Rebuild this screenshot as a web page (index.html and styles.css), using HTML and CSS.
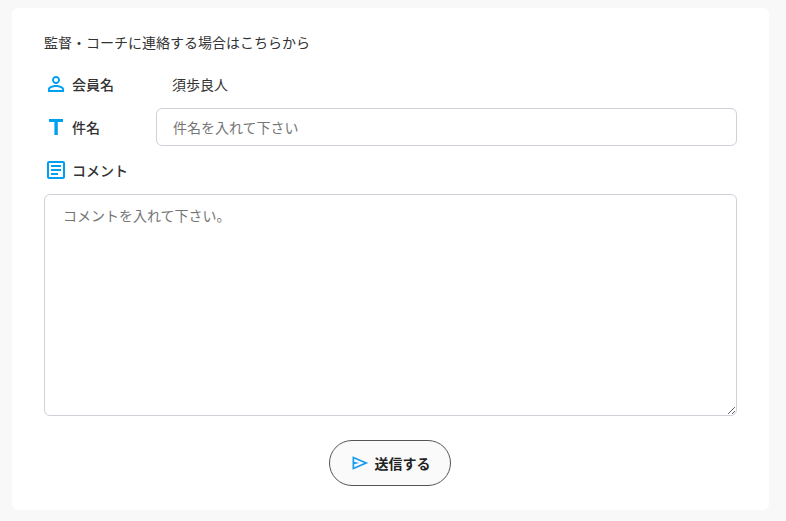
FILE: index.html
```
<!DOCTYPE html>
<html lang="ja">
<head>
  <meta charset="UTF-8" />
  <meta name="viewport" content="width=device-width, initial-scale=1.0"/>
  <title>監督・コーチに連絡</title>
  <link rel="stylesheet" href="styles.css">
</head>
<body>
  <main class="card">
    <p class="lead">監督・コーチに連絡する場合はこちらから</p>
    <form class="contact-form">
      <div class="form-row">
        <div class="form-label">
          <svg class="icon" viewBox="0 0 24 24">
            <path d="M12 5.9a2.1 2.1 0 1 1 0 4.2 2.1 2.1 0 0 1 0-4.2m0 9c2.97 0 6.1 1.46 6.1 2.1v1.1H5.9V17c0-.64 3.13-2.1 6.1-2.1M12 4C9.79 4 8 5.79 8 8s1.79 4 4 4 4-1.79 4-4-1.79-4-4-4m0 9c-2.67 0-8 1.34-8 4v3h16v-3c0-2.66-5.33-4-8-4"/>
          </svg>
          会員名
        </div>
        <div class="member-name">須歩良人</div>
      </div>
      <div class="form-row">
        <label class="form-label" for="subject">
          <svg class="icon" viewBox="0 0 24 24">
            <path d="M5 4v3h5.4v13h3.4V7H19V4z"/>
          </svg>
          件名
        </label>
        <input class="field" type="text" id="subject" placeholder="件名を入れて下さい">
      </div>
      <label class="form-label comment-label" for="comment">
        <svg class="icon" viewBox="0 0 24 24">
          <path d="M19 5v14H5V5h14m0-2H5c-1.1 0-2 .9-2 2v14c0 1.1.9 2 2 2h14c1.1 0 2-.9 2-2V5c0-1.1-.9-2-2-2zM14 17H7v-2h7v2zm3-4H7v-2h10v2zm0-4H7V7h10v2z"/>
        </svg>
        コメント
      </label>
      <textarea class="field" id="comment" placeholder="コメントを入れて下さい。"></textarea>
      <button class="submit-button" type="submit">
        <svg class="send-icon" viewBox="0 0 24 24">
          <path d="M3 20V4l19 8zm2-3 11.85-5L5 7v3.5l6 1.5-6 1.5z"/>
        </svg>
        送信する
      </button>
    </form>
  </main>
</body>
</html>
```
FILE: styles.css
```
* {
  box-sizing: border-box;
}

body {
  margin: 0;
  padding: 8px 17px 0 12px;
  background-color: #f8f8f8;
  color: #333;
  font-family: "Noto Sans CJK JP", sans-serif;
  font-size: 14px;
  line-height: 20px;
}

.card {
  height: 502px;
  padding: 24px 32px;
  background-color: #fff;
  border-radius: 6px;
}

.lead {
  margin: 0 0 14px;
}

.contact-form {
  display: flex;
  flex-direction: column;
}

.form-row {
  display: flex;
  align-items: center;
}

.form-row:first-child {
  height: 36px;
  margin-bottom: 6px;
}

.form-label {
  display: flex;
  align-items: center;
  gap: 4px;
  width: 112px;
  font-weight: 500;
}

.icon {
  width: 24px;
  height: 24px;
  fill: #00a0f0;
}

.member-name {
  padding: 0 16px;
}

.field {
  border: 1px solid #d0d0d8;
  border-radius: 6px;
  background-color: #fff;
  color: inherit;
  font: inherit;
}

.field::placeholder {
  color: #757575;
}

input.field {
  flex: 1;
  height: 38px;
  padding: 0 16px 1px;
}

.comment-label {
  margin: 12px 0;
}

textarea.field {
  width: 100%;
  height: 222px;
  padding: 10px 18px;
}

.submit-button {
  display: flex;
  align-items: center;
  align-self: center;
  justify-content: center;
  gap: 5px;
  width: 122px;
  height: 46px;
  margin-top: 24px;
  margin-right: 1px;
  border: 1px solid #555;
  border-radius: 23px;
  background-color: #fafafa;
  color: #222;
  font: inherit;
  font-weight: 700;
}

.send-icon {
  width: 20px;
  height: 20px;
  fill: #1a9cf0;
}
```
